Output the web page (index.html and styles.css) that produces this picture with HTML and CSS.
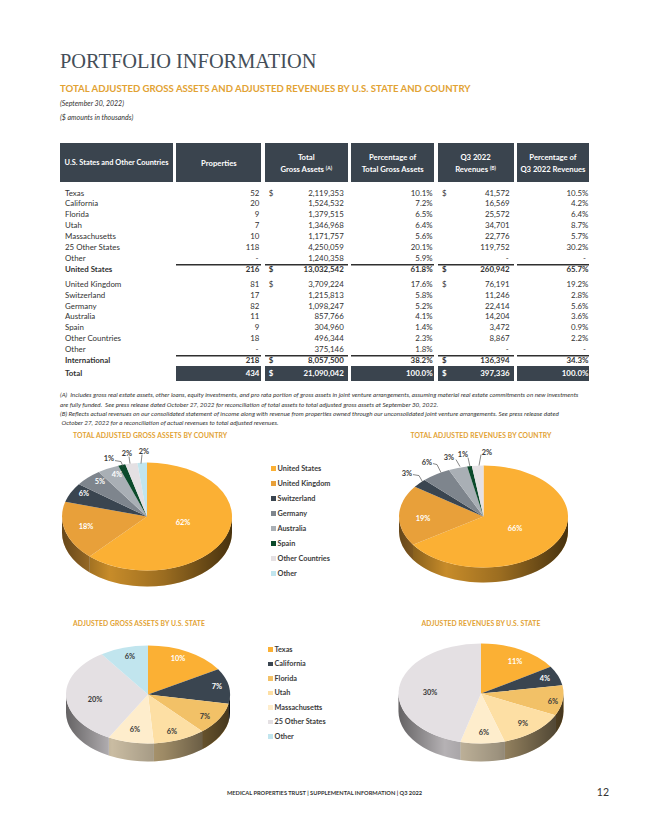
FILE: index.html
```html
<!DOCTYPE html>
<html lang="en">
<head>
<meta charset="utf-8">
<title>Portfolio Information</title>
<link rel="stylesheet" href="styles.css">
</head>
<body>
<div class="page">
  <h1 class="title">PORTFOLIO INFORMATION</h1>
  <h2 class="subtitle">TOTAL ADJUSTED GROSS ASSETS AND ADJUSTED REVENUES BY U.S. STATE AND COUNTRY</h2>
  <p class="meta">(September 30, 2022)</p>
  <p class="meta">($ amounts in thousands)</p>

  <div class="table">
    <div class="row head">
      <div class="cell nowrap"><span>U.S. States and Other Countries</span></div>
      <div class="cell"><span>Properties</span></div>
      <div class="cell"><span>Total<br>Gross Assets <sup>(A)</sup></span></div>
      <div class="cell"><span>Percentage of<br>Total Gross Assets</span></div>
      <div class="cell"><span>Q3 2022<br>Revenues <sup>(B)</sup></span></div>
      <div class="cell"><span>Percentage of<br>Q3 2022 Revenues</span></div>
    </div>

    <div class="row body first">
      <div class="cell name">Texas</div><div class="cell num c2">52</div>
      <div class="cell money"><span>$</span><span>2,119,353</span></div><div class="cell num c4">10.1%</div>
      <div class="cell money c5"><span>$</span><span>41,572</span></div><div class="cell num c6">10.5%</div>
    </div>
    <div class="row body">
      <div class="cell name">California</div><div class="cell num c2">20</div>
      <div class="cell money"><span></span><span>1,524,532</span></div><div class="cell num c4">7.2%</div>
      <div class="cell money c5"><span></span><span>16,569</span></div><div class="cell num c6">4.2%</div>
    </div>
    <div class="row body">
      <div class="cell name">Florida</div><div class="cell num c2">9</div>
      <div class="cell money"><span></span><span>1,379,515</span></div><div class="cell num c4">6.5%</div>
      <div class="cell money c5"><span></span><span>25,572</span></div><div class="cell num c6">6.4%</div>
    </div>
    <div class="row body">
      <div class="cell name">Utah</div><div class="cell num c2">7</div>
      <div class="cell money"><span></span><span>1,346,968</span></div><div class="cell num c4">6.4%</div>
      <div class="cell money c5"><span></span><span>34,701</span></div><div class="cell num c6">8.7%</div>
    </div>
    <div class="row body">
      <div class="cell name">Massachusetts</div><div class="cell num c2">10</div>
      <div class="cell money"><span></span><span>1,171,757</span></div><div class="cell num c4">5.6%</div>
      <div class="cell money c5"><span></span><span>22,776</span></div><div class="cell num c6">5.7%</div>
    </div>
    <div class="row body">
      <div class="cell name">25 Other States</div><div class="cell num c2">118</div>
      <div class="cell money"><span></span><span>4,250,059</span></div><div class="cell num c4">20.1%</div>
      <div class="cell money c5"><span></span><span>119,752</span></div><div class="cell num c6">30.2%</div>
    </div>
    <div class="row body">
      <div class="cell name">Other</div><div class="cell num c2 dash">-</div>
      <div class="cell money"><span></span><span>1,240,358</span></div><div class="cell num c4">5.9%</div>
      <div class="cell money c5 dash"><span></span><span>-</span></div><div class="cell num c6 dash">-</div>
    </div>
    <div class="row body subtotal">
      <div class="cell name">United States</div><div class="cell num c2 ruled">216</div>
      <div class="cell money ruled"><span>$</span><span>13,032,542</span></div><div class="cell num c4 ruled">61.8%</div>
      <div class="cell money c5 ruled"><span>$</span><span>260,942</span></div><div class="cell num c6 ruled">65.7%</div>
    </div>

    <div class="row body gap">
      <div class="cell name">United Kingdom</div><div class="cell num c2">81</div>
      <div class="cell money"><span>$</span><span>3,709,224</span></div><div class="cell num c4">17.6%</div>
      <div class="cell money c5"><span>$</span><span>76,191</span></div><div class="cell num c6">19.2%</div>
    </div>
    <div class="row body">
      <div class="cell name">Switzerland</div><div class="cell num c2">17</div>
      <div class="cell money"><span></span><span>1,215,813</span></div><div class="cell num c4">5.8%</div>
      <div class="cell money c5"><span></span><span>11,246</span></div><div class="cell num c6">2.8%</div>
    </div>
    <div class="row body">
      <div class="cell name">Germany</div><div class="cell num c2">82</div>
      <div class="cell money"><span></span><span>1,098,247</span></div><div class="cell num c4">5.2%</div>
      <div class="cell money c5"><span></span><span>22,414</span></div><div class="cell num c6">5.6%</div>
    </div>
    <div class="row body">
      <div class="cell name">Australia</div><div class="cell num c2">11</div>
      <div class="cell money"><span></span><span>857,766</span></div><div class="cell num c4">4.1%</div>
      <div class="cell money c5"><span></span><span>14,204</span></div><div class="cell num c6">3.6%</div>
    </div>
    <div class="row body">
      <div class="cell name">Spain</div><div class="cell num c2">9</div>
      <div class="cell money"><span></span><span>304,960</span></div><div class="cell num c4">1.4%</div>
      <div class="cell money c5"><span></span><span>3,472</span></div><div class="cell num c6">0.9%</div>
    </div>
    <div class="row body">
      <div class="cell name">Other Countries</div><div class="cell num c2">18</div>
      <div class="cell money"><span></span><span>496,344</span></div><div class="cell num c4">2.3%</div>
      <div class="cell money c5"><span></span><span>8,867</span></div><div class="cell num c6">2.2%</div>
    </div>
    <div class="row body">
      <div class="cell name">Other</div><div class="cell num c2 dash">-</div>
      <div class="cell money"><span></span><span>375,146</span></div><div class="cell num c4">1.8%</div>
      <div class="cell money c5 dash"><span></span><span>-</span></div><div class="cell num c6 dash">-</div>
    </div>
    <div class="row body subtotal">
      <div class="cell name">International</div><div class="cell num c2 ruled">218</div>
      <div class="cell money ruled"><span>$</span><span>8,057,500</span></div><div class="cell num c4 ruled">38.2%</div>
      <div class="cell money c5 ruled"><span>$</span><span>136,394</span></div><div class="cell num c6 ruled">34.3%</div>
    </div>
    <div class="row body grand">
      <div class="cell name">Total</div><div class="cell num c2 filled">434</div>
      <div class="cell money filled"><span>$</span><span>21,090,042</span></div><div class="cell num c4 filled">100.0%</div>
      <div class="cell money c5 filled"><span>$</span><span>397,336</span></div><div class="cell num c6 filled">100.0%</div>
    </div>
  </div>

  <div class="notes">
    <p>(A)&nbsp; Includes gross real estate assets, other loans, equity investments, and pro rata portion of gross assets in joint venture arrangements, assuming material real estate commitments on new investments<br>are fully funded.&nbsp; See press release dated October 27, 2022 for reconciliation of total assets to total adjusted gross assets at September 30, 2022.</p>
    <p>(B) Reflects actual revenues on our consolidated statement of income along with revenue from properties owned through our unconsolidated joint venture arrangements. See press release dated<br>&nbsp;October 27, 2022 for a reconciliation of actual revenues to total adjusted revenues.</p>
  </div>

  <div class="charts-row r1">
    <div class="chart chart-left">
      <h3 class="chart-title">TOTAL ADJUSTED GROSS ASSETS BY COUNTRY</h3>
      <svg id="pie1" class="pie" width="190" height="150"></svg>
    </div>
    <ul class="legend">
      <li><i class="sw us"></i>United States</li>
      <li><i class="sw uk"></i>United Kingdom</li>
      <li><i class="sw ch"></i>Switzerland</li>
      <li><i class="sw de"></i>Germany</li>
      <li><i class="sw au"></i>Australia</li>
      <li><i class="sw es"></i>Spain</li>
      <li><i class="sw oc"></i>Other Countries</li>
      <li><i class="sw ot"></i>Other</li>
    </ul>
    <div class="chart chart-right">
      <h3 class="chart-title">TOTAL ADJUSTED REVENUES BY COUNTRY</h3>
      <svg id="pie2" class="pie" width="208" height="150"></svg>
    </div>
  </div>

  <div class="charts-row r2">
    <div class="chart chart-left">
      <h3 class="chart-title">ADJUSTED GROSS ASSETS BY U.S. STATE</h3>
      <svg id="pie3" class="pie" width="190" height="140"></svg>
    </div>
    <ul class="legend">
      <li><i class="sw us"></i>Texas</li>
      <li><i class="sw ch"></i>California</li>
      <li><i class="sw fl"></i>Florida</li>
      <li><i class="sw ut"></i>Utah</li>
      <li><i class="sw ma"></i>Massachusetts</li>
      <li><i class="sw oc"></i>25 Other States</li>
      <li><i class="sw ot"></i>Other</li>
    </ul>
    <div class="chart chart-right">
      <h3 class="chart-title">ADJUSTED REVENUES BY U.S. STATE</h3>
      <svg id="pie4" class="pie" width="208" height="140"></svg>
    </div>
  </div>

  <footer class="footer">
    <span class="foot-text">MEDICAL PROPERTIES TRUST | SUPPLEMENTAL INFORMATION | Q3 2022</span>
    <span class="page-no">12</span>
  </footer>
</div>
<script src="script.js"></script>
</body>
</html>
```

FILE: styles.css
```css
* { box-sizing: border-box; }
html, body { margin: 0; padding: 0; background: #fff; }
body { font-family: Lato, "Noto Sans", sans-serif; color: #333; }

.page { width: 649px; height: 840px; padding: 48px 60px 0 60px; overflow: hidden; }

.title {
  font-family: "Liberation Serif", serif; font-weight: normal;
  font-size: 20.4px; line-height: 26px; margin: 0; color: #444e58; letter-spacing: 0;
}
.subtitle { margin: 8px 0 0; font-size: 9.6px; line-height: 14px; font-weight: 700; color: #e2a233; }
.meta { margin: 0; font-style: italic; font-size: 7px; line-height: 14px; color: #333; }

.table { margin-top: 19px; }
.row { display: grid; grid-template-columns: 113px 85px 83px 83px 76px 72px; column-gap: 3.4px; }
.head .cell {
  background: #3a444e; color: #fff; font-weight: 700; font-size: 7.7px; line-height: 12px;
  height: 39px; display: flex; align-items: center; justify-content: center; text-align: center;
}
.head .nowrap { white-space: nowrap; font-size: 7.4px; }
.head sup { font-size: 5px; vertical-align: 2.5px; line-height: 0; }

.body { height: 10.9px; font-size: 7.9px; line-height: 10.9px; color: #333; }
.body.first { margin-top: 5.5px; }
.body.gap { margin-top: 4.2px; }
.cell.name { padding-left: 5px; white-space: nowrap; }
.cell.num { text-align: right; padding-right: 2px; }
.cell.c4 { padding-right: 1.5px; }
.cell.c6 { padding-right: 0.5px; }
.cell.money { display: flex; justify-content: space-between; padding: 0 4px 0 4px; }
.cell.money.c5 { padding-left: 4.5px; }
.cell.dash { padding-right: 3px; }
.cell.money.c5.dash { padding-right: 5px; }
.subtotal { font-weight: 700; }
.ruled { box-shadow: inset 0 1.5px 0 #2f2f2f; }
.grand { height: 15px; line-height: 15px; margin-top: 0.3px; font-weight: 700; }
.filled { background: #3a444e; color: #fff; }

.notes { margin-top: 9px; }
.notes p { margin: 0; font-style: italic; font-size: 6.3px; line-height: 9.3px; color: #333; white-space: nowrap; }

.charts-row { display: flex; align-items: flex-start; }
.r1 { margin-top: 4px; }
.r2 { margin-top: 29px; }
.chart-title { margin: 0; font-size: 6.8px; line-height: 9px; font-weight: 700; color: #e2a233; letter-spacing: 0.1px; white-space: nowrap; }
.chart-left { width: 190px; }
.chart-left .chart-title { padding-left: 13px; }
.chart-right { width: 208px; margin-left: auto; }
.chart-right .chart-title { text-align: center; padding-right: 8px; }
.pie { display: block; }

.legend { list-style: none; margin: 0; padding: 0; font-weight: 700; font-size: 7.3px; color: #3c3c3c; }
.legend li { display: flex; align-items: center; white-space: nowrap; }
.r1 .legend { margin-top: 29.5px; padding-left: 21px; }
.r1 .legend li { height: 15px; }
.r2 .legend { margin-top: 22.7px; padding-left: 18px; }
.r2 .legend li { height: 14.5px; }
.sw { display: inline-block; width: 4.5px; height: 4.5px; margin-right: 2px; flex: none; }
.sw.us { background: #fbb034; }
.sw.uk { background: #e8a03a; }
.sw.ch { background: #3a4550; }
.sw.de { background: #7e858d; }
.sw.au { background: #a9afb5; }
.sw.es { background: #0c4a2b; }
.sw.oc { background: #e4e0e3; }
.sw.ot { background: #c1e5ee; }
.sw.fl { background: #f2c167; }
.sw.ut { background: #fddfa4; }
.sw.ma { background: #feedcc; }

.footer { display: grid; grid-template-columns: 1fr auto 1fr; margin: 18px -60px 0; align-items: center; height: 12px; }
.foot-text { grid-column: 2; font-size: 5.7px; font-weight: 700; color: #333; white-space: nowrap; }
.page-no { grid-column: 3; justify-self: end; padding-right: 40px; font-size: 10.5px; color: #333; }
```

FILE: script.js
```js
(function () {
  var C = {
    us: '#fbb034', uk: '#e8a03a', ch: '#3a4550', de: '#7e858d', au: '#a9afb5', es: '#0c4a2b',
    oc: '#e4e0e3', ot: '#c1e5ee', fl: '#f2c167', ut: '#fddfa4', ma: '#feedcc'
  };
  var charts = [
    { id: 'pie1', cx: 147, cy: 517, rx: 85, ry: 54, d: 16,
      slices: [[61.8, C.us], [17.6, C.uk], [5.8, C.ch], [5.2, C.de], [4.1, C.au], [1.4, C.es], [2.3, C.oc], [1.8, C.ot]],
      labels: [['62%', 183, 523, 1], ['18%', 86, 527, 1], ['6%', 84, 494, 1], ['5%', 100, 482, 1], ['4%', 117, 475, 1],
               ['1%', 109, 459, 0], ['2%', 127, 454, 0], ['2%', 144, 452, 0]],
      leaders: [[[115, 461], [121, 462], [123, 467]], [[129, 457], [130, 464]], [[142, 455], [141, 464]]] },
    { id: 'pie2', cx: 483.5, cy: 517, rx: 84.5, ry: 51, d: 15,
      slices: [[65.7, C.us], [19.2, C.uk], [2.8, C.ch], [5.6, C.de], [3.6, C.au], [0.9, C.es], [2.2, C.oc]],
      labels: [['66%', 515, 529, 1], ['19%', 423, 519, 1], ['3%', 407, 474, 0], ['6%', 427, 463, 0],
               ['3%', 449, 458, 0], ['1%', 463, 455, 0], ['2%', 487, 453, 0]],
      leaders: [[[413, 475], [419, 476], [423, 483]], [[433, 464], [437, 465], [441, 473]],
                [[456, 460], [460, 467]], [[468, 458], [470, 467]], [[481, 455], [479, 466]]] },
    { id: 'pie3', cx: 148, cy: 695, rx: 82, ry: 49, d: 18,
      slices: [[10.1, C.us], [7.2, C.ch], [6.5, C.fl], [6.4, C.ut], [5.6, C.ma], [20.1, C.oc], [5.9, C.ot]],
      labels: [['10%', 178, 659, 1], ['7%', 217, 687, 1], ['7%', 205, 717, 0], ['6%', 172, 732, 0],
               ['6%', 135, 730, 0], ['20%', 95, 700, 0], ['6%', 130, 657, 0]],
      leaders: [] },
    { id: 'pie4', cx: 481, cy: 694, rx: 82.5, ry: 50, d: 18,
      slices: [[10.5, C.us], [4.2, C.ch], [6.4, C.fl], [8.7, C.ut], [5.7, C.ma], [30.2, C.oc]],
      labels: [['11%', 515, 662, 1], ['4%', 545, 679, 1], ['6%', 553, 702, 0], ['9%', 523, 724, 0],
               ['6%', 484, 733, 0], ['30%', 430, 693, 0]],
      leaders: [] }
  ];

  function shade(hex, k) {
    var n = parseInt(hex.slice(1), 16);
    var r = Math.round(((n >> 16) & 255) * k), g = Math.round(((n >> 8) & 255) * k), b = Math.round((n & 255) * k);
    return 'rgb(' + r + ',' + g + ',' + b + ')';
  }
  function f(n) { return n.toFixed(2); }

  charts.forEach(function (cfg) {
    var svg = document.getElementById(cfg.id);
    var box = svg.getBoundingClientRect();
    var ox = box.left, oy = box.top;
    var cx = cfg.cx - ox, cy = cfg.cy - oy, rx = cfg.rx, ry = cfg.ry, d = cfg.d;
    function P(t) { return [cx + rx * Math.cos(t), cy + ry * Math.sin(t)]; }
    function side(t0, t1) {
      var a = P(t0), b = P(t1);
      return 'M' + f(a[0]) + ' ' + f(a[1]) + ' A' + rx + ' ' + ry + ' 0 0 1 ' + f(b[0]) + ' ' + f(b[1]) +
        ' L' + f(b[0]) + ' ' + f(b[1] + d) + ' A' + rx + ' ' + ry + ' 0 0 0 ' + f(a[0]) + ' ' + f(a[1] + d) + ' Z';
    }
    var total = cfg.slices.reduce(function (s, x) { return s + x[0]; }, 0);
    var a = -Math.PI / 2, arcs = [];
    cfg.slices.forEach(function (s) {
      var a0 = a; a += s[0] / total * 2 * Math.PI; arcs.push({ a0: a0, a1: a, col: s[1] });
    });
    var gid = 'g-' + cfg.id;
    var h = '<defs><linearGradient id="' + gid + '" gradientUnits="userSpaceOnUse" x1="' + f(cx - rx) + '" y1="0" x2="' + f(cx + rx) + '" y2="0">' +
      '<stop offset="0" stop-color="#000" stop-opacity="0.5"/>' +
      '<stop offset="0.28" stop-color="#000" stop-opacity="0.1"/>' +
      '<stop offset="0.6" stop-color="#000" stop-opacity="0.3"/>' +
      '<stop offset="1" stop-color="#000" stop-opacity="0.68"/></linearGradient></defs>';
    arcs.forEach(function (s) {
      var t0 = Math.max(s.a0, 0), t1 = Math.min(s.a1, Math.PI);
      if (t1 <= t0) return;
      h += '<path d="' + side(t0, t1) + '" fill="' + shade(s.col, 0.88) + '"/>';
    });
    h += '<path d="' + side(0, Math.PI) + '" fill="url(#' + gid + ')"/>';
    arcs.forEach(function (s) {
      var p0 = P(s.a0), p1 = P(s.a1);
      var large = (s.a1 - s.a0) > Math.PI ? 1 : 0;
      h += '<path d="M' + f(cx) + ' ' + f(cy) + ' L' + f(p0[0]) + ' ' + f(p0[1]) + ' A' + rx + ' ' + ry + ' 0 ' + large + ' 1 ' +
        f(p1[0]) + ' ' + f(p1[1]) + ' Z" fill="' + s.col + '"/>';
    });
    cfg.leaders.forEach(function (pts) {
      var pp = pts.map(function (p) { return f(p[0] - ox) + ',' + f(p[1] - oy); }).join(' ');
      h += '<polyline points="' + pp + '" fill="none" stroke="#555" stroke-width="0.7"/>';
    });
    cfg.labels.forEach(function (l) {
      h += '<text x="' + f(l[1] - ox) + '" y="' + f(l[2] - oy) + '" text-anchor="middle" dominant-baseline="central" ' +
        'font-family="Lato, sans-serif" font-weight="700" font-size="7.4" fill="' + (l[3] ? '#fff' : '#3a3a3a') + '">' + l[0] + '</text>';
    });
    svg.innerHTML = h;
  });
})();
```
